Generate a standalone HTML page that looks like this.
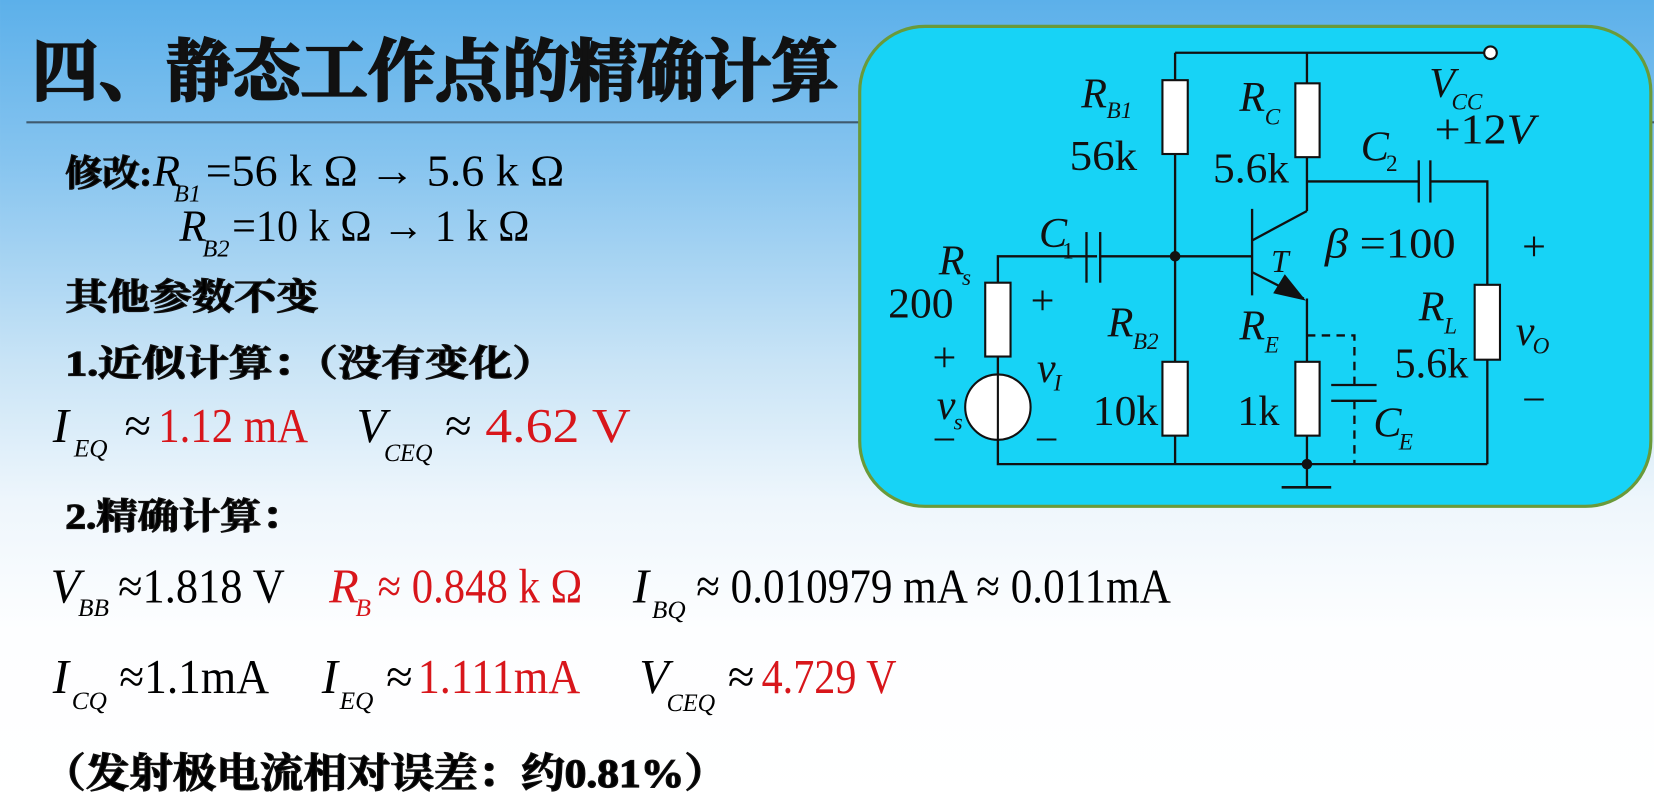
<!DOCTYPE html>
<html><head><meta charset="utf-8"><style>
html,body{margin:0;padding:0;width:1654px;height:808px;overflow:hidden;background:#fff}
svg{display:block}
.cj{font-family:"Liberation Serif","Noto Serif CJK SC",serif;font-weight:bold;stroke:#111;stroke-width:1.2}
.m{font-family:"Liberation Serif",serif}
.i{font-style:italic}
.r{fill:#d8161b}
</style></head><body>
<svg width="1654" height="808" viewBox="0 0 1568 766" xmlns="http://www.w3.org/2000/svg">
<defs>
<linearGradient id="bg" x1="0" y1="0" x2="0" y2="1">
<stop offset="0" stop-color="#5cb0ea"/>
<stop offset="0.2" stop-color="#86c4ef"/>
<stop offset="0.45" stop-color="#c9e4f6"/>
<stop offset="0.62" stop-color="#eef6fc"/>
<stop offset="0.78" stop-color="#fdfeff"/>
<stop offset="1" stop-color="#ffffff"/>
</linearGradient>
</defs>
<rect width="1568" height="766" fill="url(#bg)"/>
<line x1="25" y1="116" x2="815" y2="116" stroke="#3f5a6e" stroke-width="2"/>
<line x1="1510" y1="116" x2="1568" y2="116" stroke="#3f5a6e" stroke-width="2"/>

<text class="cj" x="30" y="90" font-size="64" style="stroke-width:2.2" textLength="765" lengthAdjust="spacingAndGlyphs" fill="#111">四、静态工作点的精确计算</text>

<text class="cj" x="62" y="176" font-size="34" textLength="82" lengthAdjust="spacingAndGlyphs">修改:</text>
<g class="m" font-size="42">
<text x="145" y="176" class="i">R</text><text x="165" y="191" font-size="23" class="i">B1</text>
<text x="195" y="176" textLength="340" lengthAdjust="spacingAndGlyphs">=56 k Ω → 5.6 k Ω</text>
<text x="170" y="228" class="i">R</text><text x="192" y="243" font-size="23" class="i">B2</text>
<text x="220" y="228" textLength="282" lengthAdjust="spacingAndGlyphs">=10 k Ω → 1 k Ω</text>
</g>
<text class="cj" x="62" y="293" font-size="34" textLength="240" lengthAdjust="spacingAndGlyphs">其他参数不变</text>
<text class="cj" x="62" y="356" font-size="34" textLength="465" lengthAdjust="spacingAndGlyphs">1.近似计算：（没有变化）</text>

<g class="m" font-size="46">
<text x="50" y="419" class="i">I</text><text x="70" y="433" font-size="24" class="i">EQ</text>
<text x="118" y="419">≈</text>
<text x="150" y="419" class="r" textLength="142" lengthAdjust="spacingAndGlyphs">1.12 mA</text>
<text x="338" y="419" class="i">V</text><text x="364" y="437" font-size="24" class="i" textLength="46" lengthAdjust="spacingAndGlyphs">CEQ</text>
<text x="422" y="419">≈</text>
<text x="460" y="419" class="r" textLength="138" lengthAdjust="spacingAndGlyphs">4.62 V</text>
</g>

<text class="cj" x="62" y="501" font-size="34" textLength="225" lengthAdjust="spacingAndGlyphs">2.精确计算：</text>

<g class="m" font-size="46">
<text x="48" y="571" class="i">V</text><text x="74" y="584" font-size="24" class="i">BB</text>
<text x="112" y="571" textLength="158" lengthAdjust="spacingAndGlyphs">≈1.818 V</text>
<text x="312" y="571" class="i r">R</text><text x="337" y="584" font-size="24" class="i r">B</text>
<text x="358" y="571" class="r" textLength="194" lengthAdjust="spacingAndGlyphs">≈ 0.848 k Ω</text>
<text x="600" y="571" class="i">I</text><text x="618" y="586" font-size="24" class="i">BQ</text>
<text x="660" y="571" textLength="450" lengthAdjust="spacingAndGlyphs">≈ 0.010979 mA ≈ 0.011mA</text>

<text x="50" y="657" class="i">I</text><text x="68" y="672" font-size="24" class="i">CQ</text>
<text x="113" y="657" textLength="142" lengthAdjust="spacingAndGlyphs">≈1.1mA</text>
<text x="305" y="657" class="i">I</text><text x="322" y="672" font-size="24" class="i">EQ</text>
<text x="366" y="657">≈</text>
<text x="396" y="657" class="r" textLength="154" lengthAdjust="spacingAndGlyphs">1.111mA</text>
<text x="606" y="657" class="i">V</text><text x="632" y="674" font-size="24" class="i" textLength="46" lengthAdjust="spacingAndGlyphs">CEQ</text>
<text x="690" y="657">≈</text>
<text x="722" y="657" class="r" textLength="128" lengthAdjust="spacingAndGlyphs">4.729 V</text>
</g>

<text class="cj" x="40" y="746" font-size="38" textLength="650" lengthAdjust="spacingAndGlyphs">（发射极电流相对误差：约0.81%）</text>

<!-- circuit box -->
<rect x="815" y="25" width="750" height="455" rx="62" fill="#17d3f6" stroke="#6a9a3a" stroke-width="3"/>
<g stroke="#111" stroke-width="2.2" fill="none">
<polyline points="1114,50 1407,50"/>
<line x1="1114" y1="50" x2="1114" y2="440"/>
<line x1="1239" y1="50" x2="1239" y2="200"/>
<line x1="1239" y1="200" x2="1187" y2="228"/>
<line x1="1187" y1="198" x2="1187" y2="280"/>
<line x1="1114" y1="243" x2="1187" y2="243"/>
<line x1="1187" y1="258" x2="1236" y2="283"/>
<line x1="1239" y1="283" x2="1239" y2="462"/>
<polyline points="1239,172 1345,172"/>
<line x1="1345" y1="152" x2="1345" y2="192"/>
<line x1="1356" y1="152" x2="1356" y2="192"/>
<polyline points="1356,172 1410,172 1410,440"/>
<polyline points="1040,243 946,243 946,440 1410,440"/>
<line x1="1043" y1="220" x2="1043" y2="268"/>
<line x1="1030" y1="220" x2="1030" y2="268"/>
<line x1="1043" y1="243" x2="1114" y2="243"/>
<line x1="1215" y1="462" x2="1262" y2="462" stroke-width="2.5"/>
<g stroke-dasharray="8,6">
<polyline points="1239,318 1284,318 1284,365"/>
<line x1="1284" y1="380" x2="1284" y2="440"/>
</g>
<line x1="1262" y1="365" x2="1305" y2="365"/>
<line x1="1262" y1="380" x2="1305" y2="380"/>
</g>
<polygon points="1238,285 1207,278 1218,260" fill="#111"/>
<circle cx="1114" cy="243" r="5" fill="#111"/>
<circle cx="1239" cy="440" r="5" fill="#111"/>
<circle cx="1413" cy="50" r="6" fill="#fff" stroke="#111" stroke-width="2"/>
<g fill="#fff" stroke="#111" stroke-width="2">
<rect x="1102" y="76" width="24" height="70"/>
<rect x="1102" y="343" width="24" height="70"/>
<rect x="1228" y="79" width="23" height="70"/>
<rect x="1228" y="343" width="23" height="70"/>
<rect x="1398" y="270" width="24" height="71"/>
<rect x="934" y="268" width="24" height="70"/>
<ellipse cx="946" cy="386" rx="31" ry="31"/>
</g>
<line x1="946" y1="355" x2="946" y2="417" stroke="#111" stroke-width="2"/>

<g class="m" font-size="40" fill="#111">
<text x="1025" y="102" class="i">R</text><text x="1049" y="112" font-size="22" class="i">B1</text>
<text x="1014" y="161" textLength="64" lengthAdjust="spacingAndGlyphs">56k</text>
<text x="1175" y="105" class="i">R</text><text x="1199" y="118" font-size="22" class="i">C</text>
<text x="1150" y="173" textLength="72" lengthAdjust="spacingAndGlyphs">5.6k</text>
<text x="1355" y="92" class="i">V</text><text x="1376" y="104" font-size="22" class="i">CC</text>
<text x="1360" y="136" textLength="95" lengthAdjust="spacingAndGlyphs">+12<tspan class="i">V</tspan></text>
<text x="1290" y="152" class="i">C</text><text x="1314" y="162" font-size="22">2</text>
<text x="985" y="234" class="i">C</text><text x="1007" y="245" font-size="22">1</text>
<text x="1205" y="258" class="i" font-size="30">T</text>
<text x="1256" y="244" textLength="124" lengthAdjust="spacingAndGlyphs"><tspan class="i">β</tspan> =100</text>
<text x="890" y="260" class="i">R</text><text x="912" y="270" font-size="22" class="i">s</text>
<text x="842" y="301" textLength="62" lengthAdjust="spacingAndGlyphs">200</text>
<text x="977" y="298">+</text>
<text x="884" y="352">+</text>
<text x="888" y="397" class="i">v</text><text x="904" y="407" font-size="22" class="i">s</text>
<text x="884" y="430">−</text>
<text x="983" y="362" class="i">v</text><text x="999" y="370" font-size="22" class="i">I</text>
<text x="981" y="430">−</text>
<text x="1050" y="319" class="i">R</text><text x="1074" y="331" font-size="22" class="i">B2</text>
<text x="1036" y="403" textLength="62" lengthAdjust="spacingAndGlyphs">10k</text>
<text x="1175" y="322" class="i">R</text><text x="1199" y="334" font-size="22" class="i">E</text>
<text x="1173" y="403">1k</text>
<text x="1302" y="414" class="i">C</text><text x="1326" y="426" font-size="22" class="i">E</text>
<text x="1443" y="247">+</text>
<text x="1345" y="304" class="i">R</text><text x="1369" y="316" font-size="22" class="i">L</text>
<text x="1322" y="358" textLength="70" lengthAdjust="spacingAndGlyphs">5.6k</text>
<text x="1437" y="327" class="i">v</text><text x="1453" y="335" font-size="22" class="i">O</text>
<text x="1443" y="392">−</text>
</g>
</svg>
</body></html>
